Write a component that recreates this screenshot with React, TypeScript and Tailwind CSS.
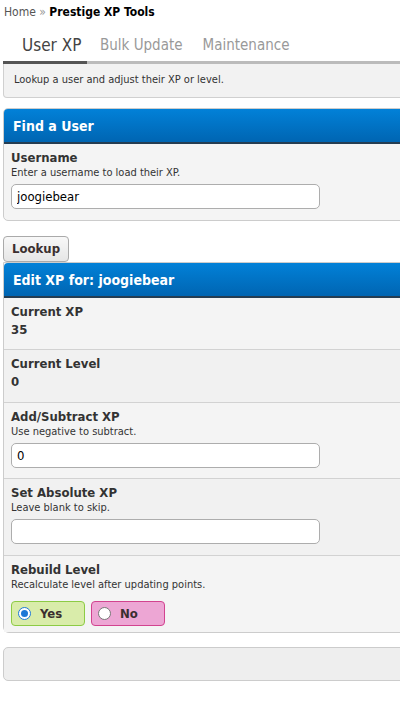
import { useState } from 'react'

const FONT = { fontFamily: '"DejaVu Sans Condensed", "DejaVu Sans", Tahoma, sans-serif' }

// ── Panel header (blue bar) ──────────────────────────────────
function PanelHeader({ title }: { title: string }) {
  return (
    <div className="h-[35px] flex items-center px-[9px] bg-gradient-to-b from-[#0281d8] to-[#0065b2] border-b-2 border-[#253d52] rounded-tl-[4px]">
      <span className="text-white font-bold text-[14px] leading-none">{title}</span>
    </div>
  )
}

function Row({ children, alt, last, pb = 'pb-[10px]' }: { children: React.ReactNode; alt?: boolean; last?: boolean; pb?: string }) {
  return (
    <div
      className={`px-[7px] pt-[6px] ${pb} ${alt ? 'bg-[#f1f1f1]' : 'bg-[#f4f4f4]'} ${last ? '' : 'border-b border-[#d2d2d2]'}`}
    >
      {children}
    </div>
  )
}

function Label({ text, sub }: { text: string; sub?: string }) {
  return (
    <>
      <div className="text-[13px] font-bold text-[#333] leading-[16px]">{text}</div>
      {sub && <div className="text-[11px] text-[#333] leading-[13px]">{sub}</div>}
    </>
  )
}

function TextInput({ value }: { value: string }) {
  return (
    <input
      defaultValue={value}
      className="block mt-[5px] w-[309px] h-[25px] px-[5px] bg-white border border-[#adadad] rounded-[5px] text-[13px] text-black outline-none"
      style={FONT}
    />
  )
}

export default function App() {
  const [rebuild, setRebuild] = useState(true)

  return (
    <div className="w-[400px] h-[705px] overflow-hidden bg-white text-[#333]" style={FONT}>
      {/* ── Breadcrumb ─────────────────────────────── */}
      <div className="pl-[4px] pt-[5px] text-[12px] leading-[15px]">
        <span className="text-[#555]">Home</span>
        <span className="text-[#999]"> » </span>
        <span className="font-bold text-black">Prestige XP Tools</span>
      </div>

      {/* ── Tabs ───────────────────────────────────── */}
      <div className="mt-[15px] pl-[3px] w-[440px]">
        <div className="flex items-end">
          <div className="w-[84px] pl-[19px] pb-[5px] text-[17px] leading-[21px] text-[#444] border-b-[3px] border-[#555]">
            User XP
          </div>
          <div className="flex-1 flex gap-[20px] pl-[13px] pb-[5px] text-[15px] leading-[21px] text-[#999] border-b-[3px] border-[#bbb]">
            <span>Bulk Update</span>
            <span>Maintenance</span>
          </div>
        </div>
        <div className="h-[34px] flex items-center pl-[10px] bg-[#f2f2f2] border border-t-0 border-[#d0d0d0] rounded-b-[4px] text-[11px] text-[#333]">
          Lookup a user and adjust their XP or level.
        </div>
      </div>

      {/* ── Find a User ────────────────────────────── */}
      <div className="mt-[10px] ml-[3px] w-[440px] border border-[#cccccc] rounded-t-[5px] rounded-bl-[5px] bg-[#f4f4f4]">
        <PanelHeader title="Find a User" />
        <div className="px-[7px] pt-[6px] pb-[11px]">
          <Label text="Username" sub="Enter a username to load their XP." />
          <TextInput value="joogiebear" />
        </div>
      </div>

      {/* ── Lookup button ──────────────────────────── */}
      <div className="mt-[15px] ml-[3px]">
        <button
          className="h-[26px] px-[8px] bg-gradient-to-b from-[#f8f8f8] to-[#e6e6e6] border border-[#aaa] rounded-[4px] text-[13px] font-bold text-[#3b2f2f]"
          style={FONT}
        >
          Lookup
        </button>
      </div>

      {/* ── Edit XP ────────────────────────────────── */}
      <div className="ml-[3px] w-[440px] border border-[#cccccc] rounded-bl-[6px] bg-[#f4f4f4]">
        <PanelHeader title="Edit XP for: joogiebear" />
        <Row pb="pb-[11px]">
          <Label text="Current XP" />
          <div className="mt-[2px] text-[13px] font-bold text-[#333] leading-[16px]">35</div>
        </Row>
        <Row alt pb="pb-[12px]">
          <Label text="Current Level" />
          <div className="mt-[2px] text-[13px] font-bold text-[#333] leading-[16px]">0</div>
        </Row>
        <Row>
          <Label text="Add/Subtract XP" sub="Use negative to subtract." />
          <TextInput value="0" />
        </Row>
        <Row alt pb="pb-[11px]">
          <Label text="Set Absolute XP" sub="Leave blank to skip." />
          <TextInput value="" />
        </Row>
        <Row last pb="pb-[6px]">
          <Label text="Rebuild Level" sub="Recalculate level after updating points." />
          <div className="mt-[10px] flex gap-[6px]">
            <label
              onClick={() => setRebuild(true)}
              className="w-[74px] h-[25px] flex items-center gap-[9px] pl-[6px] bg-[#d9ecaa] border border-[#8dcb45] rounded-[4px] text-[13px] font-bold text-[#3b2f2f] cursor-pointer"
            >
              <span className={`w-[13px] h-[13px] rounded-full flex items-center justify-center bg-white border ${rebuild ? 'border-[#1d78d6]' : 'border-[#777]'}`}>
                {rebuild && <span className="w-[7px] h-[7px] rounded-full bg-[#1d78d6]" />}
              </span>
              Yes
            </label>
            <label
              onClick={() => setRebuild(false)}
              className="w-[74px] h-[25px] flex items-center gap-[9px] pl-[6px] bg-[#eda6d4] border border-[#d2438f] rounded-[4px] text-[13px] font-bold text-[#3b2f2f] cursor-pointer"
            >
              <span className={`w-[13px] h-[13px] rounded-full flex items-center justify-center bg-white border ${!rebuild ? 'border-[#1d78d6]' : 'border-[#777]'}`}>
                {!rebuild && <span className="w-[7px] h-[7px] rounded-full bg-[#1d78d6]" />}
              </span>
              No
            </label>
          </div>
        </Row>
      </div>

      {/* ── Empty footer box ───────────────────────── */}
      <div className="mt-[14px] ml-[3px] w-[440px] h-[34px] bg-[#eeeeee] border border-[#cccccc] rounded-[5px]" />
    </div>
  )
}
